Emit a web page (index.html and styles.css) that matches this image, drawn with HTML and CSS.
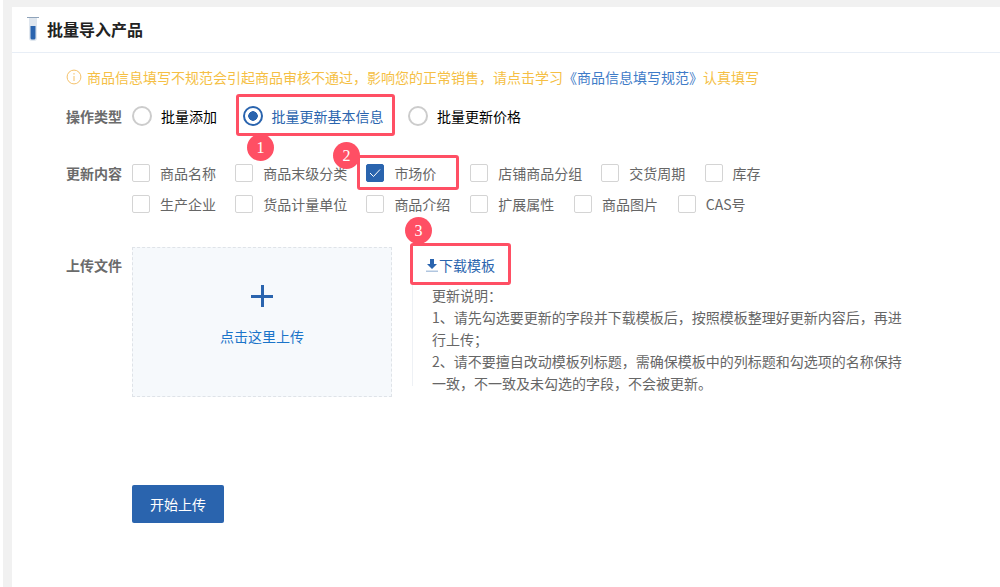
FILE: index.html
```html
<!DOCTYPE html>
<html lang="zh-CN">
<head>
    <meta charset="UTF-8">
    <title>批量导入产品</title>
    <link rel="stylesheet" href="styles.css">
</head>
<body>
    <div class="card">
        <div class="card-head">
            <svg class="tube" width="12" height="24" viewBox="0 0 12 24">
                <path d="M0 .5h12" stroke="#8fa3ba" fill="none"/>
                <path d="M2 1h8v20a3 3 0 0 1-3 3H5a3 3 0 0 1-3-3z" fill="#dfe6ee"/>
                <path d="M3.5 9h5v12a1.5 1.5 0 0 1-1.5 1.5H5A1.5 1.5 0 0 1 3.5 21z" fill="#2a64ae"/>
            </svg>
            <h2>批量导入产品</h2>
        </div>

        <div class="card-body">
            <p class="notice">
                <svg class="info" width="16" height="16" viewBox="0 0 16 16">
                    <circle cx="8" cy="8" r="6.9" fill="none" stroke="#f5c26b"/>
                    <path d="M8 7v5M8 4v1.6" stroke="#f5c26b" fill="none"/>
                </svg>
                商品信息填写不规范会引起商品审核不通过，影响您的正常销售，请点击学习<a href="#">《商品信息填写规范》</a>认真填写
            </p>

            <div class="form-row type-row">
                <label class="form-label">操作类型</label>
                <div class="radios">
                    <span class="radio black"><i></i>批量添加</span>
                    <span class="radio on"><i></i>批量更新基本信息</span>
                    <span class="radio black"><i></i>批量更新价格</span>
                </div>
            </div>

            <div class="form-row content-row">
                <label class="form-label">更新内容</label>
                <div class="checks">
                    <div class="check-line">
                        <span class="check"><i></i>商品名称</span>
                        <span class="check"><i></i>商品末级分类</span>
                        <span class="check on wide"><i><svg width="12" height="10" viewBox="0 0 12 10"><path d="M1 5l3.5 3.5L11 1.5" fill="none" stroke="#fff"/></svg></i>市场价</span>
                        <span class="check"><i></i>店铺商品分组</span>
                        <span class="check"><i></i>交货周期</span>
                        <span class="check"><i></i>库存</span>
                    </div>
                    <div class="check-line second">
                        <span class="check"><i></i>生产企业</span>
                        <span class="check"><i></i>货品计量单位</span>
                        <span class="check"><i></i>商品介绍</span>
                        <span class="check"><i></i>扩展属性</span>
                        <span class="check"><i></i>商品图片</span>
                        <span class="check"><i></i>CAS号</span>
                    </div>
                </div>
            </div>

            <div class="form-row upload-row">
                <label class="form-label">上传文件</label>
                <div class="upload-box">
                    <span class="plus"></span>
                    <span class="upload-text">点击这里上传</span>
                </div>
                <div class="upload-side">
                    <a class="download" href="#">
                        <svg width="12" height="13" viewBox="0 0 12 13">
                            <path d="M4 0h4v5h3L6 10 1 5h3z" fill="#2a64ae"/>
                            <path d="M0 12.2h12" stroke="#9db8d8" stroke-width="1.2"/>
                        </svg>下载模板</a>
                    <div class="tips">
                        更新说明：<br>
                        1、请先勾选要更新的字段并下载模板后，按照模板整理好更新内容后，再进行上传；<br>
                        2、请不要擅自改动模板列标题，需确保模板中的列标题和勾选项的名称保持一致，不一致及未勾选的字段，不会被更新。
                    </div>
                </div>
            </div>

            <button class="submit">开始上传</button>
        </div>

        <!-- tutorial marks drawn over the form -->
        <div class="mark mark-1"></div>
        <div class="mark mark-2"></div>
        <div class="mark mark-3"></div>
        <div class="badge badge-1">1</div>
        <div class="badge badge-2">2</div>
        <div class="badge badge-3">3</div>
    </div>
</body>
</html>
```

FILE: styles.css
```css
* { box-sizing: border-box; }
html, body { height: 100%; }
body { margin: 0; padding: 7px 0 0 9px; overflow: hidden; background: #f1f1f1; border-left: 3px solid #fff; font-family: "Noto Sans CJK SC", "Liberation Sans", sans-serif; font-size: 14px; color: #666; }
a { text-decoration: none; }

.card { position: relative; height: 580px; background: #fff; }
.card-head { display: flex; align-items: center; height: 46px; padding: 0 0 1px 15px; border-bottom: 1px solid #e8eef6; }
.card-head h2 { margin: 0 0 0 8px; font-size: 16px; font-weight: 700; color: #222; }
.tube { display: block; }

.card-body { padding: 0 0 0 54px; }
.notice { display: flex; align-items: center; height: 20px; margin: 14px 0 0; color: #f5bf45; line-height: 20px; }
.notice a { color: #3f7cc8; }
.info { margin: 0 5px 0 0; }

.form-row { display: flex; }
.form-label { width: 66px; flex: none; line-height: 20px; font-weight: 700; color: #6b6b6b; }

.type-row { align-items: center; height: 22px; margin-top: 18px; }
.radios { display: flex; gap: 25.5px; }
.radio { display: flex; align-items: center; line-height: 21px; }
.radio i { width: 20px; height: 20px; margin-right: 9px; border: 2px solid #ccc; border-radius: 50%; background: #fff; }
.radio.black { color: #000; }
.radio.on { margin-right: -1px; color: #2a64ae; }
.radio.on i { border: 2px solid #2a64ae; background: radial-gradient(circle, #2a64ae 0 4.5px, #fff 5px); }

.content-row { margin-top: 37px; }
.content-row .form-label { line-height: 18px; }
.checks { display: flex; flex-direction: column; gap: 13px; }
.check-line { display: flex; gap: 19.2px; }
.check-line.second .check:nth-child(n+4) { margin-left: .6px; }
.check { display: flex; align-items: center; line-height: 18px; }
.check i { display: flex; align-items: center; justify-content: center; width: 18px; height: 18px; margin-right: 10px; border: 1px solid #d4d4d4; border-radius: 2px; }
.check.on i { background: #2a64ae; border-color: #2a64ae; }
.check.wide { width: 84.6px; }

.upload-row { margin-top: 34px; }
.upload-row .form-label { margin-top: 8px; }
.upload-box { display: flex; flex-direction: column; align-items: center; flex: none; width: 260px; height: 150px; border: 1px dashed #dfe3e8; background: #f6f9fc; }
.plus { width: 22px; height: 22px; margin-top: 37px; background: linear-gradient(#2a64ae, #2a64ae) center / 22px 3px no-repeat, linear-gradient(#2a64ae, #2a64ae) center / 3px 22px no-repeat; }
.upload-text { margin-top: 19px; color: #1a74c9; line-height: 20px; }

.upload-side { width: 492px; margin-left: 20px; }
.download { display: flex; align-items: center; height: 20px; margin: 8px 0 0 14px; color: #2a64ae; line-height: 20px; }
.download svg { margin-right: 1px; }
.tips { margin-top: 9px; padding-left: 20px; background: linear-gradient(#eef1f5, #eef1f5) 0 0 / 1px 102px no-repeat; line-height: 22px; color: #666; }

.submit { display: block; width: 92px; height: 38px; margin: 88px 0 0 66px; padding: 0; border: none; border-radius: 2px; background: #2a64ae; color: #fff; font: inherit; }

.mark { position: absolute; border: 3px solid #ff4f64; border-radius: 3px; }
.mark-1 { left: 224px; top: 87px; width: 159px; height: 42px; }
.mark-2 { left: 345px; top: 148px; width: 102px; height: 35px; }
.mark-3 { left: 398px; top: 236px; width: 101px; height: 42px; }

.badge { position: absolute; width: 27px; height: 27px; border-radius: 50%; background: #ff4f64; color: #fff; font: 16px/27px "Liberation Serif", serif; text-align: center; }
.badge-1 { left: 235px; top: 127px; }
.badge-2 { left: 321px; top: 135px; }
.badge-3 { left: 393px; top: 210px; }
```
